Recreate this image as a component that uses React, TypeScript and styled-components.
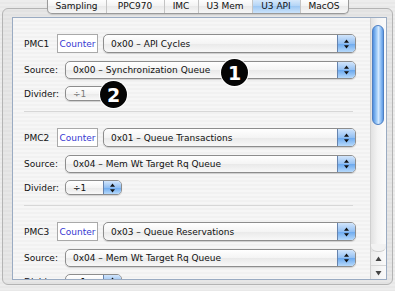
import React from "react";
import styled, { createGlobalStyle } from "styled-components";

const GlobalStyle = createGlobalStyle`
  html, body {
    margin: 0;
    padding: 0;
  }
  body {
    width: 395px;
    height: 291px;
    overflow: hidden;
    font-family: "DejaVu Sans", "Liberation Sans", sans-serif;
    background: repeating-linear-gradient(
      to bottom,
      #ededed 0,
      #ededed 2px,
      #e8e8e8 2px,
      #e8e8e8 4px
    );
  }
`;

const Window = styled.div`
  position: relative;
  display: flex;
  flex-direction: column;
  align-items: center;
  width: 395px;
  height: 291px;
  box-sizing: border-box;
  padding-left: 2px;
  padding-right: 2px;
`;

const TabStrip = styled.div`
  position: relative;
  z-index: 1;
  display: flex;
  margin-top: -1px;
  height: 14px;
  border: 1px solid #9a9a9a;
  border-top: none;
  border-radius: 0 0 5px 5px;
  overflow: hidden;
  background: linear-gradient(#ffffff, #f3f3f3 50%, #e9e9e9 51%, #f6f6f6);
  box-shadow: 0 1px 1px rgba(0, 0, 0, 0.12);
`;

const Tab = styled.div<{ $w: number; $active?: boolean }>`
  display: flex;
  align-items: center;
  justify-content: center;
  width: ${(p) => p.$w}px;
  font-size: 9px;
  color: #111;
  border-left: 1px solid #c4c4c4;
  background: ${(p) =>
    p.$active
      ? "linear-gradient(#dcecfc, #b3d4f6 50%, #9cc7f3 51%, #cbe3fb)"
      : "transparent"};
  &:first-child {
    border-left: none;
  }
`;

const TabBox = styled.div`
  align-self: stretch;
  margin-top: -6px;
  height: 277px;
  box-sizing: border-box;
  padding: 8px 5px 6px 9px;
  border: 1px solid #b4b4b4;
  border-radius: 6px;
  background: rgba(0, 0, 0, 0.025);
`;

const ScrollView = styled.div`
  display: flex;
  height: 100%;
  border: 1px solid #9aabc2;
  background: repeating-linear-gradient(
    to bottom,
    #f6f6f6 0,
    #f6f6f6 2px,
    #f1f1f1 2px,
    #f1f1f1 4px
  );
`;

const Content = styled.div`
  flex: 1;
  overflow: hidden;
  padding-left: 11px;
`;

const Section = styled.div`
  padding-top: 16px;
  padding-right: 14px;
`;

const Row = styled.div<{ $h: number; $gap?: number }>`
  display: flex;
  align-items: center;
  height: ${(p) => p.$h}px;
  margin-top: ${(p) => p.$gap ?? 0}px;
`;

const Label = styled.span<{ $w: number }>`
  flex: 0 0 ${(p) => p.$w}px;
  font-size: 9px;
  color: #111;
  white-space: nowrap;
`;

const CounterBox = styled.div`
  flex: 0 0 41px;
  height: 19px;
  box-sizing: border-box;
  margin-right: 5px;
  display: flex;
  align-items: center;
  justify-content: center;
  border: 1px solid #a9a9a9;
  background: #fff;
  color: #3737d2;
  font-size: 9px;
`;

const Popup = styled.div<{ $h: number; $w?: number }>`
  display: flex;
  align-items: stretch;
  box-sizing: border-box;
  height: ${(p) => p.$h}px;
  flex: ${(p) => (p.$w ? `0 0 ${p.$w}px` : "1")};
  border: 1px solid #8d8d8d;
  border-radius: 5px;
  overflow: hidden;
  background: linear-gradient(#ffffff, #f4f4f4 50%, #e9e9e9 51%, #f8f8f8);
  box-shadow: 0 1px 1px rgba(0, 0, 0, 0.15);
`;

const PopupText = styled.span<{ $disabled?: boolean }>`
  flex: 1;
  display: flex;
  align-items: center;
  padding-left: 7px;
  font-size: 9px;
  white-space: nowrap;
  color: ${(p) => (p.$disabled ? "#7a7a7a" : "#111")};
`;

const PopupArrows = styled.div`
  flex: 0 0 17px;
  display: flex;
  align-items: center;
  justify-content: center;
  border-left: 1px solid #6683ad;
  background: linear-gradient(#d2e5fb, #93c0f3 50%, #6aa8ee 51%, #b6d9fb);
`;

const Separator = styled.div`
  margin-top: 10px;
  margin-right: 3px;
  height: 1px;
  background: #d7d7d7;
`;

const ScrollBar = styled.div`
  flex: 0 0 15px;
  display: flex;
  flex-direction: column;
  border-left: 1px solid #d0d0d0;
  background: linear-gradient(to right, #e2e2e2, #f4f4f4 45%, #fbfbfb);
`;

const Thumb = styled.div`
  margin: 7px 2px 0 1px;
  height: 100px;
  box-sizing: border-box;
  border: 1px solid #4e7fc2;
  border-radius: 6px;
  background: linear-gradient(
    to right,
    #4f8fdf,
    #9ccaf8 35%,
    #d2e8fe 55%,
    #8bbcf3 80%,
    #5d99e4
  );
`;

const TrackEnd = styled.div`
  margin-top: auto;
  height: 7px;
  border-bottom: 1px solid #cfcfcf;
  border-radius: 0 0 6px 6px;
  background: #f2f2f2;
`;

const ArrowButton = styled.div<{ $top?: boolean }>`
  height: 13px;
  display: flex;
  align-items: center;
  justify-content: center;
  border-top: ${(p) => (p.$top ? "1px solid #d6d6d6" : "none")};
  background: linear-gradient(to right, #ececec, #fafafa);
`;

const Badge = styled.div`
  position: absolute;
  width: 27px;
  height: 27px;
  border-radius: 50%;
  background: #050505;
  box-shadow: 0 0 0 1px #fff;
  color: #fff;
  font-family: "DejaVu Sans", sans-serif;
  font-weight: bold;
  font-size: 19px;
  display: flex;
  align-items: center;
  justify-content: center;
`;

function UpDown() {
  return (
    <svg width="7" height="10" viewBox="0 0 7 10">
      <path d="M3.5 0.5 L6 3.8 L1 3.8 Z" fill="#111" />
      <path d="M3.5 9.5 L6 6.2 L1 6.2 Z" fill="#111" />
    </svg>
  );
}

function Arrow({ up }: { up?: boolean }) {
  return (
    <svg width="7" height="6" viewBox="0 0 7 6">
      <path d={up ? "M3.5 0.5 L6.5 5 L0.5 5 Z" : "M3.5 5.5 L6.5 1 L0.5 1 Z"} fill="#444" />
    </svg>
  );
}

type Pmc = {
  name: string;
  event: string;
  source: string;
  locked?: boolean;
};

const pmcs: Pmc[] = [
  { name: "PMC1", event: "0x00 – API Cycles", source: "0x00 – Synchronization Queue", locked: true },
  { name: "PMC2", event: "0x01 – Queue Transactions", source: "0x04 – Mem Wt Target Rq Queue" },
  { name: "PMC3", event: "0x03 – Queue Reservations", source: "0x04 – Mem Wt Target Rq Queue" },
];

const tabs = [
  { label: "Sampling", w: 58 },
  { label: "PPC970", w: 57 },
  { label: "IMC", w: 33 },
  { label: "U3 Mem", w: 53 },
  { label: "U3 API", w: 47, active: true },
  { label: "MacOS", w: 47 },
];

function PmcSection({ pmc }: { pmc: Pmc }) {
  return (
    <Section>
      <Row $h={19}>
        <Label $w={33}>{pmc.name}</Label>
        <CounterBox>Counter</CounterBox>
        <Popup $h={19}>
          <PopupText>{pmc.event}</PopupText>
          <PopupArrows>
            <UpDown />
          </PopupArrows>
        </Popup>
      </Row>
      <Row $h={18} $gap={8}>
        <Label $w={41}>Source:</Label>
        <Popup $h={18}>
          <PopupText>{pmc.source}</PopupText>
          <PopupArrows>
            <UpDown />
          </PopupArrows>
        </Popup>
      </Row>
      <Row $h={15} $gap={7}>
        <Label $w={41}>Divider:</Label>
        <Popup $h={15} $w={57}>
          <PopupText $disabled={pmc.locked}>÷1</PopupText>
          <PopupArrows>
            <UpDown />
          </PopupArrows>
        </Popup>
      </Row>
      <Separator />
    </Section>
  );
}

export default function App() {
  return (
    <>
      <GlobalStyle />
      <Window>
        <TabStrip>
          {tabs.map((t) => (
            <Tab key={t.label} $w={t.w} $active={t.active}>
              {t.label}
            </Tab>
          ))}
        </TabStrip>
        <TabBox>
          <ScrollView>
            <Content>
              {pmcs.map((p) => (
                <PmcSection key={p.name} pmc={p} />
              ))}
            </Content>
            <ScrollBar>
              <Thumb />
              <TrackEnd />
              <ArrowButton>
                <Arrow up />
              </ArrowButton>
              <ArrowButton $top>
                <Arrow />
              </ArrowButton>
            </ScrollBar>
          </ScrollView>
        </TabBox>
        <Badge style={{ left: 221, top: 59 }}>1</Badge>
        <Badge style={{ left: 100, top: 81 }}>2</Badge>
      </Window>
    </>
  );
}
